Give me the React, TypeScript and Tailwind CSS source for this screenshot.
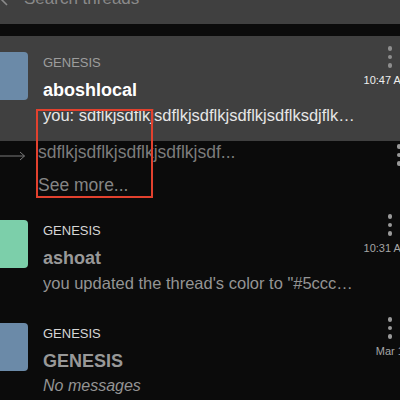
import React from "react";

type Thread = {
  color: string;
  community: string;
  title: string;
  message: string;
  time: string;
  active?: boolean;
  italic?: boolean;
};

const threads: Thread[] = [
  {
    color: "bg-[#6b8aa8]",
    community: "GENESIS",
    title: "aboshlocal",
    message: "you: sdflkjsdflkjsdflkjsdflkjsdflkjsdflksdjflk…",
    time: "10:47 AM",
    active: true,
  },
  {
    color: "bg-[#7ccfaa]",
    community: "GENESIS",
    title: "ashoat",
    message: "you updated the thread's color to \"#5ccc…",
    time: "10:31 AM",
  },
  {
    color: "bg-[#6b8aa8]",
    community: "GENESIS",
    title: "GENESIS",
    message: "No messages",
    time: "Mar 12",
    italic: true,
  },
];

function Dots({ className }: { className: string }) {
  return (
    <div className="flex flex-col gap-[4px]">
      {[0, 1, 2].map((i) => (
        <span key={i} className={`block h-[4.5px] w-[4.5px] rounded-full ${className}`} />
      ))}
    </div>
  );
}

function ThreadRow({ thread }: { thread: Thread }) {
  const a = thread.active;
  return (
    <div className={`flex h-[103px] ${a ? "h-[105px] bg-[#404040]" : ""}`}>
      <div className={`-ml-[20px] mt-4 h-12 w-12 shrink-0 rounded-[4px] ${thread.color}`} />
      <div className="ml-[15px] min-w-0 flex-1 pt-[19px]">
        <div className={`text-[13px] leading-[16px] ${a ? "text-[#9d9d9d]" : "text-[#d6d6d6]"}`}>
          {thread.community}
        </div>
        <div
          className={`mt-[7px] text-[18px] leading-[24px] ${
            a ? "font-bold text-white" : "font-semibold text-[#989898]"
          }`}
        >
          {thread.title}
        </div>
        <div
          className={`mt-[3px] overflow-hidden whitespace-nowrap leading-[20px] ${
            thread.italic ? "text-[16px] italic" : "text-[16.5px]"
          } ${a ? "text-[#e6e6e6]" : "text-[#949494]"}`}
        >
          {thread.message}
        </div>
      </div>
      <div className="flex w-[50px] shrink-0 flex-col items-end pt-[10px]">
        <div className="mr-[20px]">
          <Dots className={a ? "bg-[#8e8e8e]" : "bg-[#9a9a9a]"} />
        </div>
        <div
          className={`mr-[2px] mt-[5px] whitespace-nowrap text-[11px] leading-[14px] ${
            a ? "text-[#eeeeee]" : "text-[#a6a6a6]"
          }`}
        >
          {thread.time}
        </div>
      </div>
    </div>
  );
}

export default function App() {
  return (
    <div className="relative h-[400px] w-[400px] overflow-hidden bg-[#0b0b0b] font-['Liberation_Sans',Arial,sans-serif]">
      <div className="w-[412px]">
        <div className="-mt-[20px] flex h-[44px] items-start bg-[#404040]">
          <svg className="-ml-[1px] mt-[10px] h-[18px] w-[10px] shrink-0" viewBox="0 0 10 18" fill="none">
            <polyline points="8,1 1,8 8,15" stroke="#8a8a8a" strokeWidth="1.6" />
          </svg>
          <div className="ml-[15px] pt-[9px] text-[17px] leading-[20px] text-[#8a8a8a]">Search threads</div>
        </div>

        <div className="h-[12px]" />

        <ThreadRow thread={threads[0]} />

        <div className="flex h-[63px]">
          <svg className="mt-[10px] h-[10px] w-[26px] shrink-0" viewBox="0 0 26 10" fill="none">
            <line x1="0" y1="5" x2="24.5" y2="5" stroke="#7a7a7a" strokeWidth="1" />
            <polyline points="20,1 24.5,5 20,9" stroke="#7a7a7a" strokeWidth="1" />
          </svg>
          <div className="ml-[12px] min-w-0 flex-1 text-[17.5px] leading-[22px] text-[#7c7c7c]">
            <div className="whitespace-nowrap">sdflkjsdflkjsdflkjsdflkjsdf...</div>
            <div className="mt-[11px] whitespace-nowrap text-[#858585]">See more...</div>
          </div>
          <div className="flex w-[50px] shrink-0 flex-col items-end pt-[3px]">
            <div className="mr-[11px]">
              <Dots className="bg-[#9a9a9a]" />
            </div>
          </div>
        </div>

        <ThreadRow thread={threads[1]} />
        <ThreadRow thread={threads[2]} />
      </div>

      <div className="absolute left-[36px] top-[109px] h-[89px] w-[117px] border-2 border-[#e2412e]" />
    </div>
  );
}
